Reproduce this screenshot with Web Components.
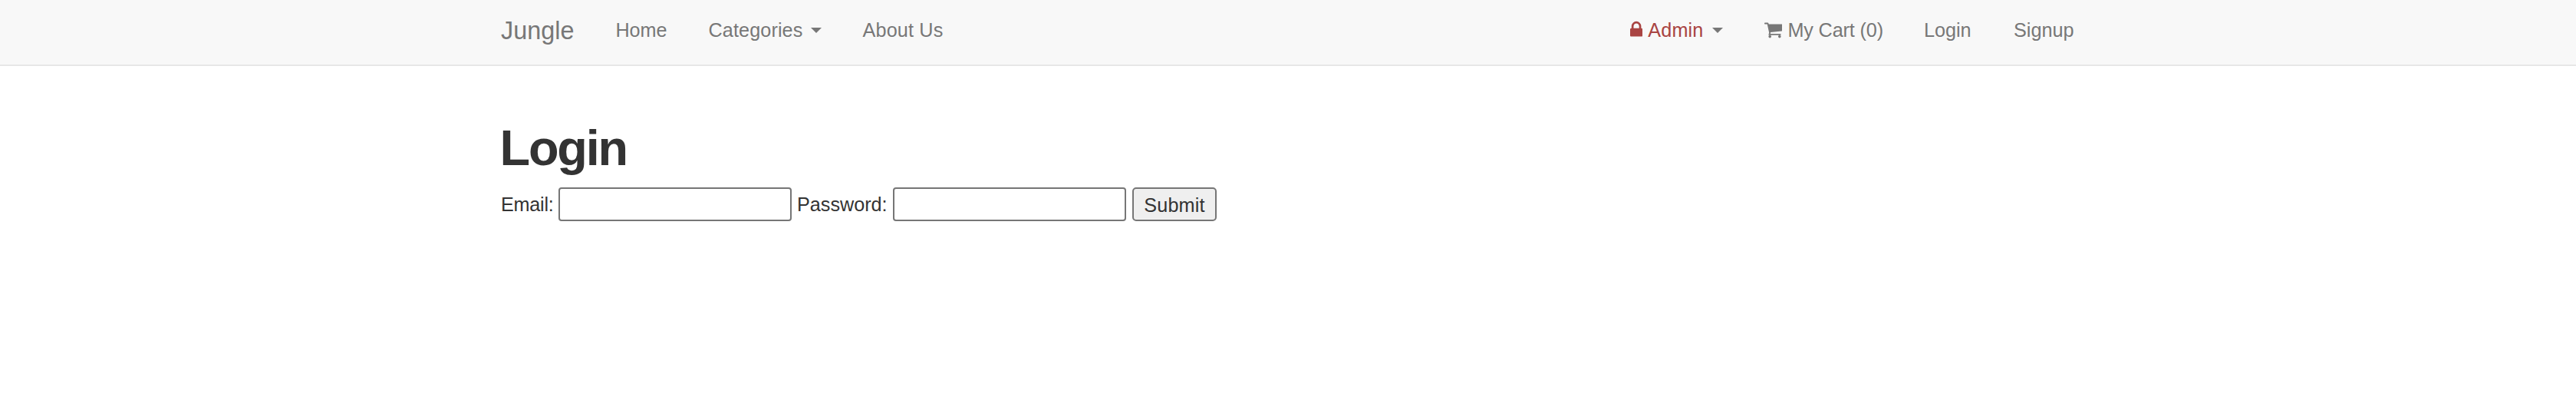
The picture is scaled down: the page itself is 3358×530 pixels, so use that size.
<!DOCTYPE html>
<html lang="en">
<head>
<meta charset="utf-8">
<title>Jungle</title>
<style>
html, body { margin: 0; background: #fff; }
body { font: 25.2px/36px "Liberation Sans", Arial, sans-serif; color: #333; overflow: hidden; }
</style>
</head>
<body>
<jungle-navbar></jungle-navbar>
<login-page></login-page>

<script>
function define(name, html) {
  customElements.define(name, class extends HTMLElement {
    constructor() {
      super();
      const t = document.createElement('template');
      t.innerHTML = html;
      this.attachShadow({ mode: 'open' }).append(t.content.cloneNode(true));
    }
  });
}

define('nav-caret', `
<style>
:host { display: block; width: 0; height: 0; border: 7px solid transparent; border-top-color: #777; border-bottom: 0; margin: 0 0 0 11px; }
</style>`);

define('lock-icon', `
<style>:host { display: block; width: 16.2px; height: 25.2px; margin-right: 7px; } svg { display: block; }</style>
<svg width="16.2" height="25.2" viewBox="320 0 1152 1792" fill="currentColor"><path d="M640 768h512v-192q0-106-75-181t-181-75-181 75-75 181v192zm832 96v576q0 40-28 68t-68 28h-960q-40 0-68-28t-28-68v-576q0-40 28-68t68-28h32v-192q0-184 132-316t316-132 316 132 132 316v192h32q40 0 68 28t28 68z"/></svg>`);

define('cart-icon', `
<style>:host { display: block; width: 23.4px; height: 25.2px; margin-right: 7px; } svg { display: block; }</style>
<svg width="23.4" height="25.2" viewBox="64 0 1664 1792" fill="currentColor"><path d="M704 1536q0 52-38 90t-90 38-90-38-38-90 38-90 90-38 90 38 38 90zm896 0q0 52-38 90t-90 38-90-38-38-90 38-90 90-38 90 38 38 90zm128-1088v512q0 24-16.5 42.5t-40.5 21.5l-1044 122q13 60 13 70 0 16-24 64h920q26 0 45 19t19 45-19 45-45 19h-1024q-26 0-45-19t-19-45q0-11 8-31.5t16-36 21.5-40 15.5-29.5l-177-823h-204q-26 0-45-19t-19-45 19-45 45-19h256q16 0 28.5 6.5t19.5 15.5 13 24.5 8 26 5.5 29.5 4.5 26h1201q26 0 45 19t19 45z"/></svg>`);

define('nav-link', `
<style>
:host { display: block; padding: 0 27px; color: #777; white-space: nowrap; }
:host([danger]) { color: #a94442; }
a { display: flex; align-items: center; color: inherit; text-decoration: none; cursor: pointer; width: var(--w, auto); }
</style>
<a><slot name="icon"></slot><span><slot></slot></span><slot name="caret"></slot></a>`);

define('jungle-navbar', `
<style>
:host { display: block; box-sizing: border-box; height: 86px; background: #f8f8f8; border-bottom: 2px solid #e7e7e7; }
nav { display: flex; width: 2052px; margin: 0 auto; padding-top: 21px; }
.brand { font-size: 32.4px; line-height: 36px; padding-top: 1px; color: #777; width: 95.4px; }
.left, .right { display: flex; }
.left { margin-left: 27px; }
.right { margin-left: auto; margin-right: -27px; }
</style>
<nav>
  <span class="brand">Jungle</span>
  <div class="left">
    <nav-link>Home</nav-link>
    <nav-link style="--w:147px;letter-spacing:.1px">Categories<nav-caret slot="caret"></nav-caret></nav-link>
    <nav-link style="letter-spacing:.15px">About Us</nav-link>
  </div>
  <div class="right">
    <nav-link danger style="--w:121px;letter-spacing:.2px"><lock-icon slot="icon"></lock-icon>Admin<nav-caret slot="caret"></nav-caret></nav-link>
    <nav-link style="--w:154px;letter-spacing:-.12px"><cart-icon slot="icon"></cart-icon>My Cart (0)</nav-link>
    <nav-link style="--w:63px">Login</nav-link>
    <nav-link style="--w:80px">Signup</nav-link>
  </div>
</nav>`);

define('form-field', `
<style>
:host { display: flex; align-items: center; }
label { width: var(--label-width); white-space: nowrap; }
input { box-sizing: border-box; width: 304px; height: 44px; margin: 0; padding: 2px 4px; border: 2px solid #767676; border-radius: 4px; background: #fff; font: inherit; color: inherit; outline: 0; }
</style>
<label><slot></slot></label><input>`);

define('login-page', `
<style>
:host { display: block; width: 2052px; margin: 0 auto; padding-top: 71px; }
h1 { margin: 0 0 16px -1.5px; font-size: 64.8px; line-height: 71px; font-weight: 700; letter-spacing: -2.2px; }
form { display: flex; align-items: center; gap: 7px; }
button { box-sizing: border-box; width: 110px; height: 44px; margin: 0 0 0 1px; padding: 1px 0 0; border: 2px solid #767676; border-radius: 5px; background: #efefef; color: #333; font: inherit; line-height: 36px; letter-spacing: .2px; }
</style>
<h1>Login</h1>
<form>
  <form-field style="--label-width:75px;letter-spacing:-.25px">Email:</form-field>
  <form-field style="--label-width:125px">Password:</form-field>
  <button type="button">Submit</button>
</form>`);
</script>
</body>
</html>
